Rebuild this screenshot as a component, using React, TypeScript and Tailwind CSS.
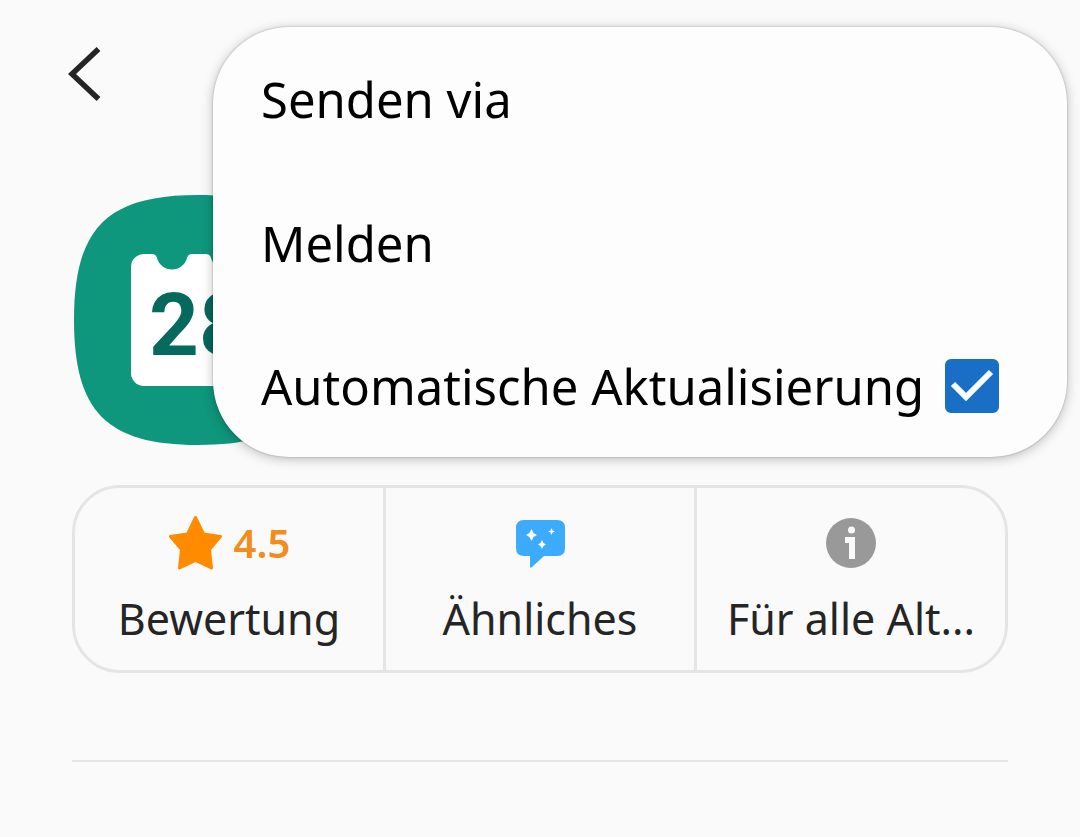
import { useState } from 'react'
import type { ReactNode } from 'react'

function CalendarIcon() {
  return (
    <svg viewBox="0 0 250 250" className="h-[250px] w-[250px]" role="img" aria-label="Kalender">
      <path
        d="M126 0C220 0 250 34 250 125S220 250 126 250C34 250 2 216 2 125S34 0 126 0Z"
        fill="#0e977c"
      />
      <path
        d="M72 59H80Q84 59 85 63A15.500 15.500 0 0 0 115 63Q116 59 120 59H134Q138 59 139 63A15.500 15.500 0 0 0 169 63Q170 59 174 59H182A13 13 0 0 1 195 72V178A13 13 0 0 1 182 191H72A13 13 0 0 1 59 178V72A13 13 0 0 1 72 59Z"
        fill="#ffffff"
      />
      <text x="77" y="160" fontSize="87" fontWeight="700" fill="#05695e" className="font-['Roboto',sans-serif]">
        28
      </text>
    </svg>
  )
}

function StarIcon() {
  return (
    <svg viewBox="0 0 54 54" className="h-[54px] w-[54px]" aria-hidden="true">
      <path
        d="M27.500 1.500L35.500 18L52.500 20.500L41.500 33.500L43.500 52L27.500 44.500L11.500 52L13.500 33.500L2.500 20.500L19.500 18Z"
        fill="#ff8c00"
        stroke="#ff8c00"
        strokeWidth="3"
        strokeLinejoin="round"
      />
    </svg>
  )
}

function SimilarIcon() {
  return (
    <svg viewBox="0 0 50 50" className="h-[50px] w-[50px]" aria-hidden="true">
      <path
        d="M9 2H42Q50 2 50 10V30Q50 38 42 38H29L17 49Q15 51 15 48V38H9Q1 38 1 30V10Q1 2 9 2Z"
        fill="#3dabfb"
      />
      <path
        d="M16.500 11L18.500 15L22 17L18.500 19L16.500 23L14.500 19L11 17L14.500 15ZM27 22L28.500 25L31 26.500L28.500 28L27 31L25.500 28L23 26.500L25.500 25ZM36.500 10L37.500 12.500L40 13.500L37.500 14.500L36.500 17L35.500 14.500L33 13.500L35.500 12.500Z"
        fill="#ffffff"
      />
    </svg>
  )
}

function InfoIcon() {
  return (
    <svg viewBox="0 0 50 50" className="h-[50px] w-[50px]" aria-hidden="true">
      <circle cx="25" cy="25" r="25" fill="#999999" />
      <circle cx="25.500" cy="12" r="3.500" fill="#fafafa" />
      <path d="M19 19H29V41H23V25H19Z" fill="#fafafa" />
    </svg>
  )
}

function InfoTile({ icon, label }: { icon: ReactNode; label: string }) {
  return (
    <button type="button" className="flex min-w-0 flex-1 flex-col items-center pt-[27px] pb-5">
      <span className="flex h-14 items-center gap-3">{icon}</span>
      <span className="mt-4 text-[43px] leading-[63px] whitespace-nowrap">{label}</span>
    </button>
  )
}

export default function App() {
  const [autoUpdate, setAutoUpdate] = useState(true)

  return (
    <div className="relative min-h-screen bg-[#fafafa] font-['Noto_Sans',sans-serif] text-[#252525]">
      <header className="px-16 pt-11">
        <button type="button" aria-label="Zurück" className="block">
          <svg viewBox="0 0 40 60" className="h-[60px] w-10" fill="none" stroke="#252525" strokeWidth="5.500">
            <path d="M34.500 5L8 30L34.500 55" />
          </svg>
        </button>
      </header>

      <main className="px-[72px] pt-[91px]">
        <CalendarIcon />

        <section className="mt-10 flex divide-x-3 divide-[#e5e5e5] rounded-[48px] border-3 border-[#e5e5e5]">
          <InfoTile
            icon={
              <>
                <StarIcon />
                <span className="text-[40px] font-semibold text-[#f28c1c]">4.5</span>
              </>
            }
            label="Bewertung"
          />
          <InfoTile icon={<SimilarIcon />} label="Ähnliches" />
          <InfoTile icon={<InfoIcon />} label="Für alle Alt..." />
        </section>

        <hr className="mt-[87px] border-t-2 border-[#e5e5e5]" />
      </main>

      <div className="absolute top-[27px] right-[13px] left-[213px] rounded-[76px] bg-[#fdfdfd] text-[49px] leading-[64px] text-black shadow-[0_2px_12px_rgba(0,0,0,0.25),0_0_2px_rgba(0,0,0,0.3)]">
        <button type="button" className="flex h-36 w-full items-center px-12">
          Senden via
        </button>
        <button type="button" className="flex h-36 w-full items-center px-12">
          Melden
        </button>
        <label className="flex h-[142px] items-center justify-between pr-[68px] pl-12 whitespace-nowrap">
          Automatische Aktualisierung
          <span className="relative h-[54px] w-[54px] shrink-0">
            <input
              type="checkbox"
              checked={autoUpdate}
              onChange={(e) => setAutoUpdate(e.target.checked)}
              className="peer block h-full w-full appearance-none rounded-md border-4 border-[#999999] checked:border-[#196ec5] checked:bg-[#196ec5]"
            />
            <svg
              viewBox="0 0 54 54"
              className="pointer-events-none invisible absolute inset-0 peer-checked:visible"
              fill="none"
              stroke="#fafdff"
              strokeWidth="6"
            >
              <path d="M8 25L21 38L46 13" />
            </svg>
          </span>
        </label>
      </div>
    </div>
  )
}
